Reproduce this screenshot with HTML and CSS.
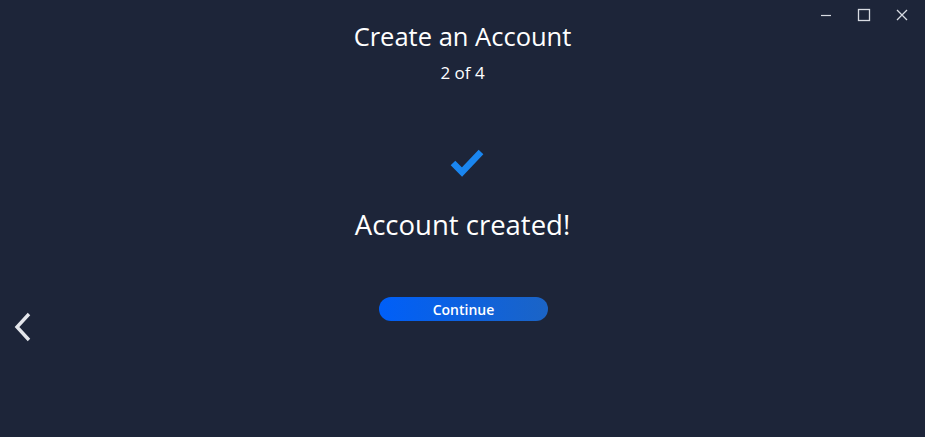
FILE: index.html
```html
<!DOCTYPE html>
<html lang="en">
<head>
    <meta charset="UTF-8">
    <title>Create an Account</title>
    <link rel="stylesheet" href="styles.css">
</head>
<body>
    <div class="window-controls">
        <span class="win-btn">
            <svg width="12" height="12" viewBox="0 0 12 12"><path d="M1 6.5h10" stroke="#d8dbe2" stroke-width="1.2"/></svg>
        </span>
        <span class="win-btn">
            <svg width="14" height="14" viewBox="0 0 14 14"><rect x="1.5" y="1.5" width="11" height="11" fill="none" stroke="#d8dbe2" stroke-width="1.3"/></svg>
        </span>
        <span class="win-btn">
            <svg width="12" height="12" viewBox="0 0 12 12"><path d="M1 1l10 10M11 1L1 11" stroke="#d8dbe2" stroke-width="1.3"/></svg>
        </span>
    </div>

    <div class="container">
        <h2 class="title">Create an Account</h2>
        <div class="step">2 of 4</div>

        <div class="check">
            <svg width="34" height="30" viewBox="0 0 34 30"><path d="M3 15l9 9L31 4" fill="none" stroke="#1a86f0" stroke-width="6.5"/></svg>
        </div>

        <h3 class="done">Account created!</h3>

        <button class="btn">Continue</button>
    </div>

    <button class="back">
        <svg width="20" height="30" viewBox="0 0 20 30"><path d="M16 2L4 15l12 13" fill="none" stroke="#e4e6eb" stroke-width="3.4"/></svg>
    </button>
</body>
</html>
```

FILE: styles.css
```css
body {
    margin: 0;
    height: 437px;
    background-color: #1d2539;
    font-family: "Open Sans", "Noto Sans", sans-serif;
    color: #ffffff;
    overflow: hidden;
}

.window-controls {
    position: absolute;
    top: 0;
    right: 4px;
    display: flex;
}

.win-btn {
    width: 38px;
    height: 29px;
    display: flex;
    align-items: center;
    justify-content: center;
}

.container {
    display: flex;
    flex-direction: column;
    align-items: center;
    padding-top: 18px;
}

.title {
    margin: 0;
    font-size: 25.5px;
    font-weight: 400;
    line-height: 36px;
}

.step {
    font-size: 17px;
    line-height: 24px;
    margin-top: 7px;
}

.check {
    margin-top: 63px;
    height: 30px;
    padding-left: 9px;
}

.done {
    margin: 28px 0 0;
    font-size: 27.5px;
    font-weight: 400;
    line-height: 38px;
}

.btn {
    margin-top: 53px;
    margin-left: 2px;
    width: 169px;
    height: 24px;
    border: none;
    border-radius: 12px;
    background: linear-gradient(90deg, #005ff8, #1b64c6);
    color: #ffffff;
    font-family: inherit;
    font-size: 14px;
    font-weight: 600;
    padding: 0;
}

.back {
    position: absolute;
    left: 13px;
    top: 312px;
    background: none;
    border: none;
    padding: 0;
}
```
